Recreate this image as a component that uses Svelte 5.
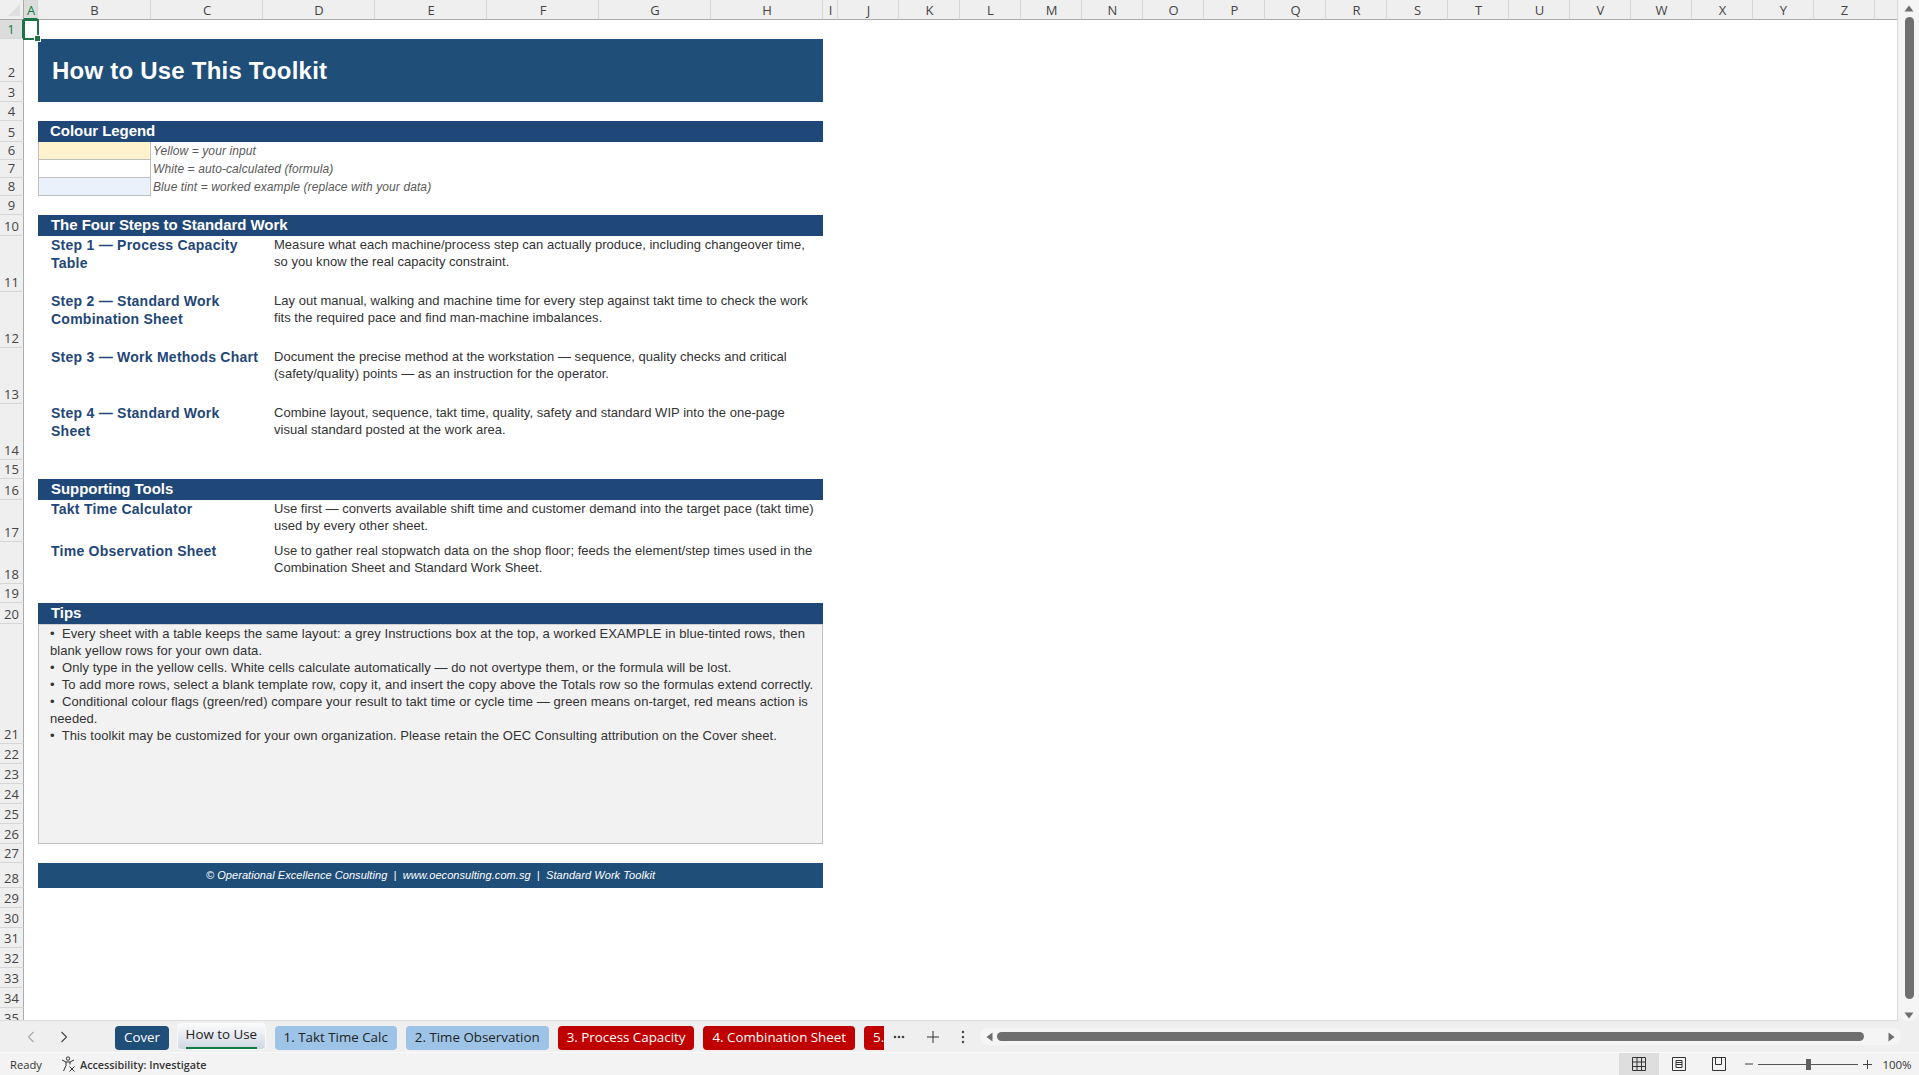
<script>
	const columns = [
		['A', 14], ['B', 113], ['C', 112], ['D', 112], ['E', 112], ['F', 112], ['G', 112], ['H', 112], ['I', 15],
		...'JKLMNOPQRSTUVWXYZ'.split('').map((c) => [c, 61]),
		['AA', 61]
	];
	const rowHeights = [19, 43, 20, 19, 21, 18, 18, 18, 19, 21, 56, 56, 56, 56, 19, 21, 42, 42, 19, 21, 120, 20, 20, 20, 20, 20, 19, 25, 20, 20, 20, 20, 20, 20, 20];

	const legend = [
		{ cls: 'yellow', text: 'Yellow = your input' },
		{ cls: 'white', text: 'White = auto-calculated (formula)' },
		{ cls: 'tint', text: 'Blue tint = worked example (replace with your data)' }
	];
	const steps = [
		{ label: ['Step 1 — Process Capacity', 'Table'], desc: ['Measure what each machine/process step can actually produce, including changeover time,', 'so you know the real capacity constraint.'] },
		{ label: ['Step 2 — Standard Work', 'Combination Sheet'], desc: ['Lay out manual, walking and machine time for every step against takt time to check the work', 'fits the required pace and find man-machine imbalances.'] },
		{ label: ['Step 3 — Work Methods Chart'], desc: ['Document the precise method at the workstation — sequence, quality checks and critical', '(safety/quality) points — as an instruction for the operator.'] },
		{ label: ['Step 4 — Standard Work', 'Sheet'], desc: ['Combine layout, sequence, takt time, quality, safety and standard WIP into the one-page', 'visual standard posted at the work area.'] }
	];
	const tools = [
		{ label: ['Takt Time Calculator'], desc: ['Use first — converts available shift time and customer demand into the target pace (takt time)', 'used by every other sheet.'] },
		{ label: ['Time Observation Sheet'], desc: ['Use to gather real stopwatch data on the shop floor; feeds the element/step times used in the', 'Combination Sheet and Standard Work Sheet.'] }
	];
	const tips = [
		'•  Every sheet with a table keeps the same layout: a grey Instructions box at the top, a worked EXAMPLE in blue-tinted rows, then',
		'blank yellow rows for your own data.',
		'•  Only type in the yellow cells. White cells calculate automatically — do not overtype them, or the formula will be lost.',
		'•  To add more rows, select a blank template row, copy it, and insert the copy above the Totals row so the formulas extend correctly.',
		'•  Conditional colour flags (green/red) compare your result to takt time or cycle time — green means on-target, red means action is',
		'needed.',
		'•  This toolkit may be customized for your own organization. Please retain the OEC Consulting attribution on the Cover sheet.'
	];
	const tabs = [
		{ name: 'Cover', cls: 'navy' },
		{ name: 'How to Use', cls: 'active' },
		{ name: '1. Takt Time Calc', cls: 'sky' },
		{ name: '2. Time Observation', cls: 'sky' },
		{ name: '3. Process Capacity', cls: 'red' },
		{ name: '4. Combination Sheet', cls: 'red' },
		{ name: '5. Work Sheet', cls: 'red' }
	];
</script>

<div class="excel">
	<div class="workspace">
		<div class="sheet">
			<div class="corner"><span class="corner-tri"></span></div>
			{#each columns as [name, width]}
				<div class="colhead" class:sel={name === 'A'} style="width:{width}px">{name}</div>
			{/each}
			{#each rowHeights as h, i}
				<div class="rowhead" class:sel={i === 0} style="grid-row:{i + 2};height:{h}px">{i + 1}</div>
			{/each}

			<div class="cursor"><span class="handle"></span></div>

			<div class="title">How to Use This Toolkit</div>

			<div class="section s-legend">Colour Legend</div>
			{#each legend as item, i}
				<div class="swatch {item.cls}" style="grid-row:{i + 7}"></div>
				<div class="legend-text" style="grid-row:{i + 7}">{item.text}</div>
			{/each}

			<div class="section s-steps">The Four Steps to Standard Work</div>
			{#each steps as step, i}
				<div class="label" style="grid-row:{i + 12}">
					{#each step.label as line}<div>{line}</div>{/each}
				</div>
				<div class="desc" style="grid-row:{i + 12}">
					{#each step.desc as line}<div>{line}</div>{/each}
				</div>
			{/each}

			<div class="section s-tools">Supporting Tools</div>
			{#each tools as tool, i}
				<div class="label" style="grid-row:{i + 18}">
					{#each tool.label as line}<div>{line}</div>{/each}
				</div>
				<div class="desc" style="grid-row:{i + 18}">
					{#each tool.desc as line}<div>{line}</div>{/each}
				</div>
			{/each}

			<div class="section s-tips">Tips</div>
			<div class="tips">
				{#each tips as line}<div>{line}</div>{/each}
			</div>

			<div class="footer">© Operational Excellence Consulting &nbsp;|&nbsp; www.oeconsulting.com.sg &nbsp;|&nbsp; Standard Work Toolkit</div>
		</div>

		<div class="vscroll">
			<svg class="arrow" width="10" height="7" viewBox="0 0 10 7"><path d="M5 0.5 L9.5 6.5 H0.5 Z" fill="#6e6e6e" /></svg>
			<div class="vthumb"></div>
			<svg class="arrow" width="10" height="7" viewBox="0 0 10 7"><path d="M0.5 0.5 H9.5 L5 6.5 Z" fill="#6e6e6e" /></svg>
		</div>
	</div>

	<div class="tabbar">
		<div class="nav">
			<svg width="8" height="12" viewBox="0 0 8 12"><path d="M6.5 1 L1.5 6 L6.5 11" fill="none" stroke="#a6a6a6" stroke-width="1.1" /></svg>
			<svg width="8" height="12" viewBox="0 0 8 12"><path d="M1.5 1 L6.5 6 L1.5 11" fill="none" stroke="#444" stroke-width="1.1" /></svg>
		</div>
		<div class="tabs">
			{#each tabs as tab}
				<div class="tab {tab.cls}"><span>{tab.name}</span></div>
			{/each}
		</div>
		<div class="tab-tools">
			<svg width="12" height="4" viewBox="0 0 12 4"><circle cx="2" cy="2" r="1.3" fill="#444" /><circle cx="6" cy="2" r="1.3" fill="#444" /><circle cx="10" cy="2" r="1.3" fill="#444" /></svg>
			<svg width="12" height="12" viewBox="0 0 12 12"><path d="M6 0 V12 M0 6 H12" stroke="#333" stroke-width="1" fill="none" /></svg>
			<svg width="4" height="14" viewBox="0 0 4 14"><circle cx="2" cy="2" r="1.2" fill="#444" /><circle cx="2" cy="7" r="1.2" fill="#444" /><circle cx="2" cy="12" r="1.2" fill="#444" /></svg>
		</div>
		<div class="hscroll">
			<svg width="7" height="10" viewBox="0 0 7 10"><path d="M6.5 0.5 V9.5 L0.5 5 Z" fill="#6e6e6e" /></svg>
			<div class="hthumb"></div>
			<svg width="7" height="10" viewBox="0 0 7 10"><path d="M0.5 0.5 V9.5 L6.5 5 Z" fill="#6e6e6e" /></svg>
		</div>
	</div>

	<div class="statusbar">
		<span class="ready">Ready</span>
		<svg class="a11y" width="15" height="16" viewBox="0 0 15 16" fill="none" stroke="#333" stroke-width="1">
			<circle cx="7" cy="2.6" r="1.7" />
			<path d="M1 4 L5 6 H9 L13 4 M5 6 V9.5 L2.5 15 M9 6 V8.5" />
			<path d="M8.5 10.5 L13.5 15.5 M13.5 10.5 L8.5 15.5" />
		</svg>
		<span class="a11y-text">Accessibility: Investigate</span>
		<div class="status-right">
			<div class="view on">
				<svg width="14" height="14" viewBox="0 0 14 14" fill="none" stroke="#333" stroke-width="1"><path d="M0.5 0.5 H13.5 V13.5 H0.5 Z M0.5 5 H13.5 M0.5 9.5 H13.5 M5 0.5 V13.5 M9.5 0.5 V13.5" /></svg>
			</div>
			<div class="view">
				<svg width="14" height="14" viewBox="0 0 14 14" fill="none" stroke="#333" stroke-width="1"><path d="M0.5 0.5 H13.5 V13.5 H0.5 Z M4 3.5 H10 V10.5 H4 Z M4 5.5 H10 M4 7.5 H10" /></svg>
			</div>
			<div class="view">
				<svg width="14" height="14" viewBox="0 0 14 14" fill="none" stroke="#333" stroke-width="1"><path d="M0.5 0.5 H13.5 V13.5 H0.5 Z M3.5 0.5 V7.5 H9.5 V0.5" /></svg>
			</div>
			<div class="zoom">
				<svg width="8" height="8" viewBox="0 0 8 8"><path d="M0 4 H8" stroke="#444" stroke-width="1" /></svg>
				<div class="slider"><span class="knob"></span></div>
				<svg width="9" height="9" viewBox="0 0 9 9"><path d="M0 4.5 H9 M4.5 0 V9" stroke="#444" stroke-width="1" /></svg>
			</div>
			<span class="pct">100%</span>
		</div>
	</div>
</div>

<style>
	:global(body) {
		margin: 0;
		overflow: hidden;
	}
	.excel {
		width: 1919px;
		height: 1075px;
		display: flex;
		flex-direction: column;
		font-family: "Liberation Sans", Arial, sans-serif;
		background: #fff;
	}
	.workspace {
		flex: 1;
		min-height: 0;
		display: flex;
		background: #efefef;
	}
	.sheet {
		flex: 1;
		min-width: 0;
		overflow: hidden;
		display: grid;
		position: relative;
		grid-template-columns: 24px repeat(27, max-content);
		grid-template-rows: 20px repeat(35, max-content);
		align-content: start;
		justify-content: start;
		background: #fff;
		border-bottom: 1px solid #dcdcdc;
		border-right: 1px solid #dcdcdc;
	}

	/* headers */
	.corner {
		grid-row: 1;
		grid-column: 1;
		background: #efefef;
		border-bottom: 1px solid #ababab;
		border-right: 1px solid #ababab;
		box-sizing: border-box;
		display: flex;
		justify-content: flex-end;
		align-items: flex-end;
		padding: 0 3px 3px 0;
	}
	.corner-tri {
		width: 0;
		height: 0;
		border-left: 12px solid transparent;
		border-bottom: 12px solid #dfdfdf;
	}
	.colhead {
		grid-row: 1;
		box-sizing: border-box;
		height: 20px;
		background: #efefef;
		border-bottom: 1px solid #ababab;
		border-right: 1px solid #d6d6d6;
		font: 13px/21px "Open Sans", sans-serif;
		color: #444;
		text-align: center;
		white-space: nowrap;
		padding-left: 1px;
	}
	.colhead.sel {
		background: #dcdcdc;
		color: #107c41;
		border-bottom: 2px solid #107c41;
	}
	.rowhead {
		grid-column: 1;
		box-sizing: border-box;
		background: #efefef;
		border-right: 1px solid #ababab;
		border-bottom: 1px solid #d6d6d6;
		font: 13px/17px "Open Sans", sans-serif;
		color: #444;
		text-align: center;
		display: flex;
		justify-content: center;
		align-items: flex-end;
	}
	.rowhead.sel {
		background: #dcdcdc;
		color: #107c41;
		border-right: 2px solid #107c41;
	}
	.cursor {
		grid-row: 2;
		grid-column: 2;
		margin: -1px -1px -1px -1px;
		border: 2px solid #1f7246;
		position: relative;
		z-index: 2;
	}
	.handle {
		position: absolute;
		right: -4px;
		bottom: -4px;
		width: 5px;
		height: 5px;
		background: #1f7246;
		border: 1px solid #fff;
	}

	/* sheet content */
	.title {
		grid-column: 3 / 10;
		grid-row: 3 / 5;
		background: #1f4e79;
		color: #fff;
		font-size: 24px;
		font-weight: bold;
		letter-spacing: 0.22px;
		display: flex;
		align-items: center;
		padding-left: 14px;
	}
	.section {
		grid-column: 3 / 10;
		background: #1f4778;
		color: #fff;
		font-size: 15px;
		font-weight: bold;
		letter-spacing: -0.05px;
		display: flex;
		align-items: center;
		padding: 0 0 2px 13px;
	}
	.s-legend { grid-row: 6; padding-left: 12px; }
	.s-steps { grid-row: 11; }
	.s-tools { grid-row: 17; }
	.s-tips { grid-row: 21; }
	.swatch {
		grid-column: 3;
		border: 1px solid #bfbfbf;
		border-top-width: 0;
	}
	.swatch.yellow { background: #fff2cc; }
	.swatch.white { background: #fff; }
	.swatch.tint { background: #eaf1fb; }
	.legend-text {
		grid-column: 4 / 10;
		font-size: 12px;
		font-style: italic;
		letter-spacing: 0.1px;
		color: #595959;
		line-height: 18px;
		padding-left: 2px;
	}
	.label {
		grid-column: 3 / 5;
		padding-left: 13px;
		color: #1f4778;
		font-size: 14px;
		font-weight: bold;
		letter-spacing: 0.25px;
		line-height: 18px;
	}
	.desc {
		grid-column: 5 / 10;
		padding-left: 11px;
		color: #333;
		font-size: 13px;
		letter-spacing: 0.03px;
		line-height: 17px;
		white-space: nowrap;
	}
	.tips {
		grid-column: 3 / 10;
		grid-row: 22 / 28;
		background: #f2f2f2;
		border: 1px solid #bfbfbf;
		border-top-color: #d0d0d0;
		padding-left: 11px;
		color: #333;
		font-size: 13px;
		letter-spacing: 0.07px;
		line-height: 17px;
		white-space: pre;
	}
	.footer {
		grid-column: 3 / 10;
		grid-row: 29;
		background: #1f4e79;
		color: #fff;
		font-size: 11px;
		font-style: italic;
		letter-spacing: 0.06px;
		display: flex;
		justify-content: center;
		align-items: center;
		padding-bottom: 2px;
		box-sizing: border-box;
	}

	/* scrollbars */
	.vscroll {
		width: 20px;
		margin-left: 1px;
		flex: none;
		box-sizing: border-box;
		background: #f5f5f5;
		border-radius: 0 0 9px 9px;
		display: flex;
		flex-direction: column;
		align-items: center;
		padding: 5px 0 2px;
		gap: 5px;
	}
	.vscroll .arrow {
		flex: none;
	}
	.vthumb {
		flex: 1;
		width: 9px;
		background: #6f6f6f;
		border-radius: 5px;
		margin-bottom: 8px;
	}

	/* tab bar */
	.tabbar {
		height: 32px;
		flex: none;
		background: #efefef;
		display: flex;
		align-items: flex-start;
		border-bottom: 1px solid #fafafa;
		box-sizing: border-box;
	}
	.nav {
		width: 115px;
		height: 31px;
		flex: none;
		display: flex;
		align-items: center;
		gap: 25px;
		padding-left: 27px;
		box-sizing: border-box;
	}
	.tabs {
		width: 769px;
		flex: none;
		overflow: hidden;
		display: flex;
		gap: 9px;
		padding-top: 1px;
		height: 28px;
		align-items: flex-end;
	}
	.tab {
		flex: none;
		height: 24px;
		box-sizing: border-box;
		padding: 0 9px;
		border-radius: 4px;
		font: 13.35px/23px "Open Sans", sans-serif;
		white-space: nowrap;
	}
	.tab.navy { background: #1f4e79; color: #fff; }
	.tab.sky { background: #9dc3e6; color: #222; }
	.tab.red { background: #c00000; color: #fff; }
	.tab.active {
		height: 27px;
		margin-left: -1px;
		padding: 0 7.5px;
		color: #222;
		background: linear-gradient(#fbfbfb, #cfd7e3);
		border: 1px solid #fafafa;
		line-height: 21px;
	}
	.tab.active span {
		display: inline-block;
		border-bottom: 2px solid #107c41;
		height: 23px;
	}
	.tab-tools {
		width: 96px;
		height: 31px;
		flex: none;
		display: flex;
		align-items: center;
		gap: 22px;
		padding-left: 9px;
		box-sizing: border-box;
	}
	.hscroll {
		flex: 1;
		height: 17px;
		margin-top: 7px;
		margin-right: 18px;
		background: #f5f5f5;
		border-radius: 8px;
		display: flex;
		align-items: center;
		padding: 0 6px;
		gap: 4px;
	}
	.hthumb {
		flex: 1;
		height: 9px;
		background: #6f6f6f;
		border-radius: 5px;
		margin-right: 20px;
	}

	/* status bar */
	.statusbar {
		height: 22px;
		flex: none;
		background: #f3f3f3;
		display: flex;
		align-items: center;
		font: 11.2px "Open Sans", sans-serif;
		color: #333;
	}
	.ready {
		margin-left: 10px;
		width: 51px;
	}
	.a11y {
		flex: none;
	}
	.a11y-text {
		margin-left: 4px;
		font-weight: 600;
		font-size: 10.8px;
	}
	.status-right {
		margin-left: auto;
		display: flex;
		align-items: center;
		height: 100%;
	}
	.view {
		width: 40px;
		height: 100%;
		display: flex;
		align-items: center;
		justify-content: center;
	}
	.view.on {
		background: #dedede;
	}
	.zoom {
		display: flex;
		align-items: center;
		gap: 5px;
		margin-left: 6px;
	}
	.slider {
		width: 100px;
		height: 1px;
		background: #555;
		position: relative;
	}
	.knob {
		position: absolute;
		left: 48px;
		top: -5px;
		width: 5px;
		height: 11px;
		background: #5f5f5f;
	}
	.pct {
		width: 44px;
		text-align: center;
		margin-left: 3px;
		font-size: 11.5px;
	}
</style>
